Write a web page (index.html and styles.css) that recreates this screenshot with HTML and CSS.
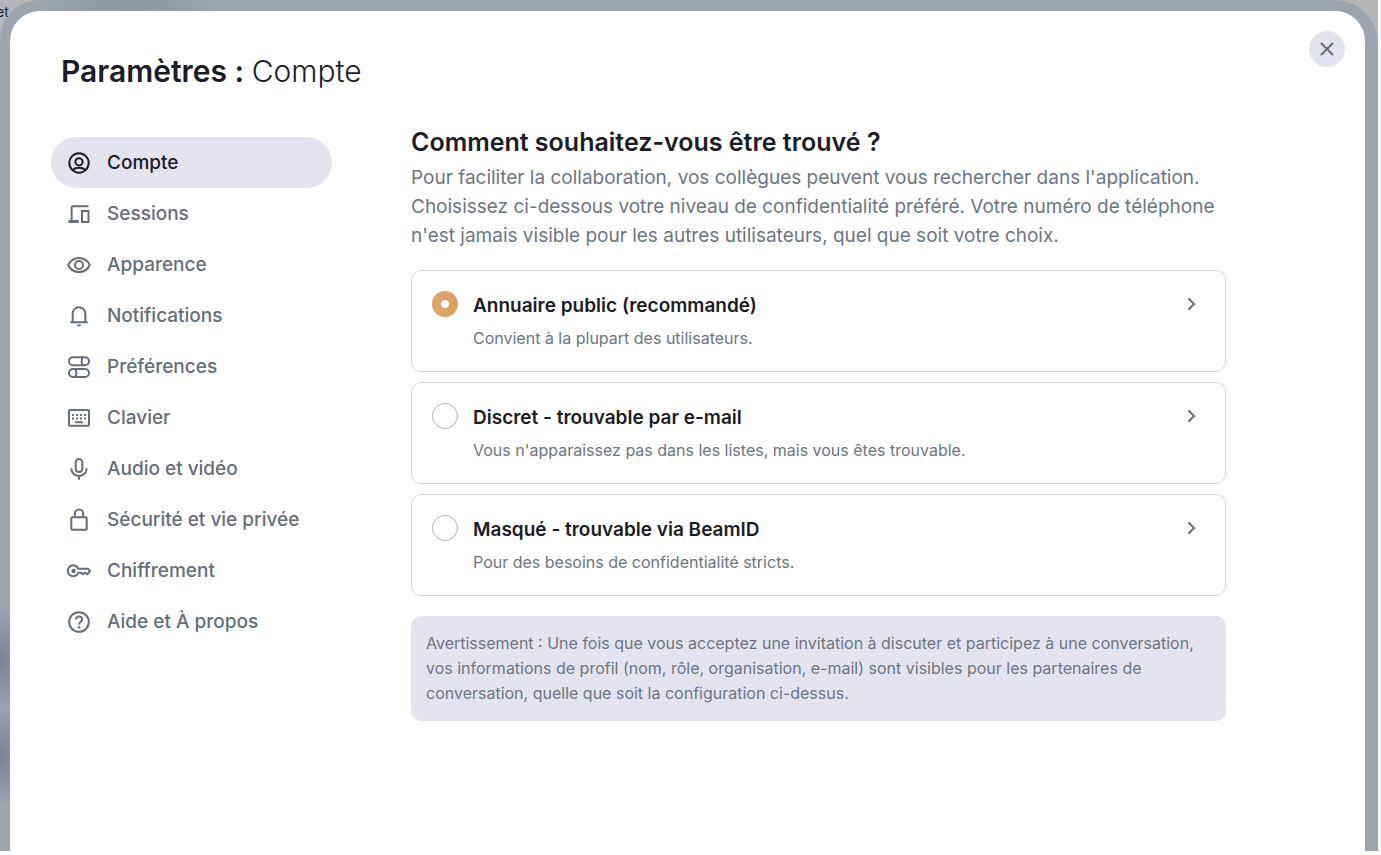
FILE: index.html
```
<!DOCTYPE html>
<html lang="fr">
<head>
    <meta charset="UTF-8">
    <meta name="viewport" content="width=device-width, initial-scale=1.0">
    <title>Paramètres : Compte</title>
    <link rel="stylesheet" href="styles.css">
</head>
<body>
    <div class="app">
        <span class="app-text">et</span>
        <div class="overlay">
            <main class="modal" role="dialog" aria-labelledby="modalTitle">
                <header class="modal-header">
                    <h1 id="modalTitle">Paramètres : <span>Compte</span></h1>
                    <button class="close-btn" type="button" aria-label="Fermer">
                        <svg width="16" height="16" viewBox="0 0 16 16"><path d="M2.500 2.500l11 11M13.500 2.500l-11 11"/></svg>
                    </button>
                </header>

                <div class="modal-body">
                    <nav class="sidebar">
                        <a href="#compte" class="nav-item active">
                            <svg class="icon" viewBox="0 0 24 24"><circle cx="12" cy="12" r="9.7"/><circle cx="12" cy="10.8" r="3.6"/><path d="M5.6 18.9c3.3-2.9 9.5-2.9 12.8 0"/></svg>
                            Compte
                        </a>
                        <a href="#sessions" class="nav-item">
                            <svg class="icon" viewBox="0 0 24 24"><path d="M21.500 4.200H5.600a1 1 0 0 0-1 1v14"/><path d="M1.500 19.500h10.300" stroke-width="3"/><path d="M15 9h6.500v11H15z"/></svg>
                            Sessions
                        </a>
                        <a href="#apparence" class="nav-item">
                            <svg class="icon" viewBox="0 0 24 24"><path d="M1.200 12C3.300 7.400 7.400 4.900 12 4.900S20.700 7.400 22.800 12C20.700 16.600 16.600 19.100 12 19.100S3.300 16.600 1.200 12z"/><circle cx="12" cy="12" r="4"/></svg>
                            Apparence
                        </a>
                        <a href="#notifications" class="nav-item">
                            <svg class="icon" viewBox="0 0 24 24"><path d="M3.300 18.300h17.400M5.700 18V9.600a6.300 6.300 0 0 1 12.600 0V18"/><path class="fill" d="M10 20.500h4a2 2 0 0 1-4 0z"/></svg>
                            Notifications
                        </a>
                        <a href="#preferences" class="nav-item">
                            <svg class="icon" viewBox="0 0 24 24"><rect x="2" y="2.300" width="20" height="8" rx="4"/><rect x="2" y="14" width="20" height="8" rx="4"/><path d="M15.800 2.500c-1.700 2.600-1.700 5 0 7.600M8.200 14.200c1.700 2.600 1.700 5 0 7.600"/></svg>
                            Préférences
                        </a>
                        <a href="#clavier" class="nav-item">
                            <svg class="icon" viewBox="0 0 24 24"><rect x="2" y="4" width="20" height="15.700" rx="1"/><path d="M5 8.900h14M5 12.600h14" stroke-dasharray="2 2"/><path d="M8.200 16.200h7.600"/></svg>
                            Clavier
                        </a>
                        <a href="#audio" class="nav-item">
                            <svg class="icon" viewBox="0 0 24 24"><rect x="8.700" y="2" width="6.600" height="13" rx="3.300"/><path d="M4.300 11.300c0 4.500 3.300 7.600 7.700 7.600s7.700-3.100 7.700-7.600M12 19v3.800"/></svg>
                            Audio et vidéo
                        </a>
                        <a href="#securite" class="nav-item">
                            <svg class="icon" viewBox="0 0 24 24"><rect x="4.300" y="9.200" width="15.400" height="12.600" rx="1"/><path d="M7.800 9V5.600a4.200 4.200 0 0 1 8.400 0V9"/></svg>
                            Sécurité et vie privée
                        </a>
                        <a href="#chiffrement" class="nav-item">
                            <svg class="icon" viewBox="0 0 24 24"><path d="M11.200 9.700H21l2 2.400-2.600 3-2.400-1.400-2 1.600-2-1.500h-2.800A5.400 5.400 0 1 1 11.200 9.700z"/><circle class="fill" cx="6.500" cy="12" r="2.200"/></svg>
                            Chiffrement
                        </a>
                        <a href="#aide" class="nav-item">
                            <svg class="icon" viewBox="0 0 24 24"><circle cx="12" cy="12" r="9.800"/><path d="M8.900 9.400c.2-2 1.500-3 3.200-3 1.800 0 3.100 1.100 3.100 2.800 0 2.500-3.100 2.700-3.100 5.300"/><circle class="fill" cx="12.100" cy="17.200" r="1.300"/></svg>
                            Aide et À propos
                        </a>
                    </nav>

                    <section class="content">
                        <h2>Comment souhaitez-vous être trouvé ?</h2>
                        <p class="intro">Pour faciliter la collaboration, vos collègues peuvent vous rechercher dans l'application. Choisissez ci-dessous votre niveau de confidentialité préféré. Votre numéro de téléphone n'est jamais visible pour les autres utilisateurs, quel que soit votre choix.</p>

                        <div class="options">
                            <div class="option">
                                <input type="radio" name="visibility" id="public" checked>
                                <label for="public">
                                    <span class="option-title">Annuaire public (recommandé)</span>
                                    <span class="option-text">Convient à la plupart des utilisateurs.</span>
                                </label>
                                <button class="more-btn" type="button" aria-label="Détails">
                                    <svg width="16" height="16" viewBox="0 0 16 16"><path d="M5 3l5 5-5 5"/></svg>
                                </button>
                            </div>
                            <div class="option">
                                <input type="radio" name="visibility" id="discret">
                                <label for="discret">
                                    <span class="option-title">Discret - trouvable par e-mail</span>
                                    <span class="option-text">Vous n'apparaissez pas dans les listes, mais vous êtes trouvable.</span>
                                </label>
                                <button class="more-btn" type="button" aria-label="Détails">
                                    <svg width="16" height="16" viewBox="0 0 16 16"><path d="M5 3l5 5-5 5"/></svg>
                                </button>
                            </div>
                            <div class="option">
                                <input type="radio" name="visibility" id="masque">
                                <label for="masque">
                                    <span class="option-title">Masqué - trouvable via BeamID</span>
                                    <span class="option-text">Pour des besoins de confidentialité stricts.</span>
                                </label>
                                <button class="more-btn" type="button" aria-label="Détails">
                                    <svg width="16" height="16" viewBox="0 0 16 16"><path d="M5 3l5 5-5 5"/></svg>
                                </button>
                            </div>
                        </div>

                        <p class="notice">Avertissement : Une fois que vous acceptez une invitation à discuter et participez à une conversation, vos informations de profil (nom, rôle, organisation, e-mail) sont visibles pour les partenaires de conversation, quelle que soit la configuration ci-dessus.</p>
                    </section>
                </div>
            </main>
        </div>
    </div>
</body>
</html>
```
FILE: styles.css
```
* {
    margin: 0;
    padding: 0;
    box-sizing: border-box;
}

body {
    font-family: Inter, 'Liberation Sans', sans-serif;
    background: white;
    color: #1c1d24;
    min-height: 100vh;
    padding: 0 3px 4px 0;
    display: flex;
}

.app {
    flex: 1;
    display: flex;
    position: relative;
    background: #b3b5b9;
    overflow: hidden;
}

.app-text {
    position: absolute;
    top: 4px;
    left: -4px;
    font-size: 14px;
    line-height: 16px;
    color: #1c1d24;
}

/* dimmed layer around the dialog */
.overlay {
    flex: 1;
    display: flex;
    position: relative;
    padding: 11px 13px 0 10px;
    border-radius: 40px 44px 0 0;
    background:
        radial-gradient(ellipse 90px 40px at 130px 0, #8f96a2, transparent),
        radial-gradient(ellipse 40px 50px at 0 660px, #7c818e, transparent),
        radial-gradient(ellipse 40px 50px at 0 755px, #7c818e, transparent),
        #9ca4ae;
}

.modal {
    flex: 1;
    background: white;
    border-radius: 30px 30px 0 0;
}

.modal-header {
    display: flex;
    justify-content: space-between;
    align-items: flex-start;
    padding: 20px 20px 0 51px;
}

.modal-header h1 {
    margin-top: 20px;
    font-size: 30px;
    line-height: 40px;
    font-weight: 600;
}

.modal-header h1 span {
    font-weight: 300;
}

.close-btn {
    width: 36px;
    height: 36px;
    border: none;
    border-radius: 50%;
    background: #e4e4ef;
    display: flex;
    align-items: center;
    justify-content: center;
    cursor: pointer;
}

.close-btn svg,
.more-btn svg {
    fill: none;
    stroke: #656e79;
    stroke-width: 2;
    stroke-linecap: round;
}

.modal-body {
    display: flex;
    align-items: flex-start;
    gap: 79px;
    padding: 35px 40px 0 41px;
}

.sidebar {
    flex: 0 0 281px;
    padding-top: 11px;
}

.nav-item {
    display: flex;
    align-items: center;
    gap: 16px;
    padding: 14px 16px 13px;
    border-radius: 26px;
    color: #656e79;
    font-size: 19px;
    line-height: 24px;
    font-weight: 500;
    text-decoration: none;
}

.nav-item.active {
    background: #e4e4ef;
    color: #1c1d24;
}

.icon {
    width: 24px;
    height: 24px;
    fill: none;
    stroke: currentColor;
    stroke-width: 2;
}

.icon .fill {
    fill: currentColor;
    stroke: none;
}

.content {
    flex: 0 1 815px;
}

.content h2 {
    font-size: 25px;
    line-height: 32px;
    font-weight: 600;
    margin-bottom: 5px;
}

.intro {
    color: #6d7681;
    font-size: 19px;
    line-height: 29px;
    margin-bottom: 20px;
}

.options {
    display: grid;
    gap: 10px;
    margin-bottom: 20px;
}

.option {
    display: flex;
    align-items: flex-start;
    border: 1px solid #d5d8de;
    border-radius: 10px;
    padding: 20px 25px 20px 20px;
}

.option input {
    appearance: none;
    width: 26px;
    height: 26px;
    border: 1px solid #b0b5be;
    border-radius: 50%;
    background: white;
}

.option input:checked {
    border: 9px solid #d9a566;
}

.option label {
    flex: 1;
    padding-left: 15px;
}

.option-title,
.option-text {
    display: block;
}

.option-title {
    font-size: 19px;
    line-height: 30px;
    font-weight: 600;
}

.option-text {
    margin-top: 4px;
    color: #6d7681;
    font-size: 16px;
    line-height: 26px;
}

.more-btn {
    border: none;
    background: none;
    padding: 5px 0;
    line-height: 0;
    cursor: pointer;
}

.notice {
    padding: 15px;
    border-radius: 10px;
    background: #e4e4ef;
    color: #6d7681;
    font-size: 16px;
    line-height: 25px;
}
```
